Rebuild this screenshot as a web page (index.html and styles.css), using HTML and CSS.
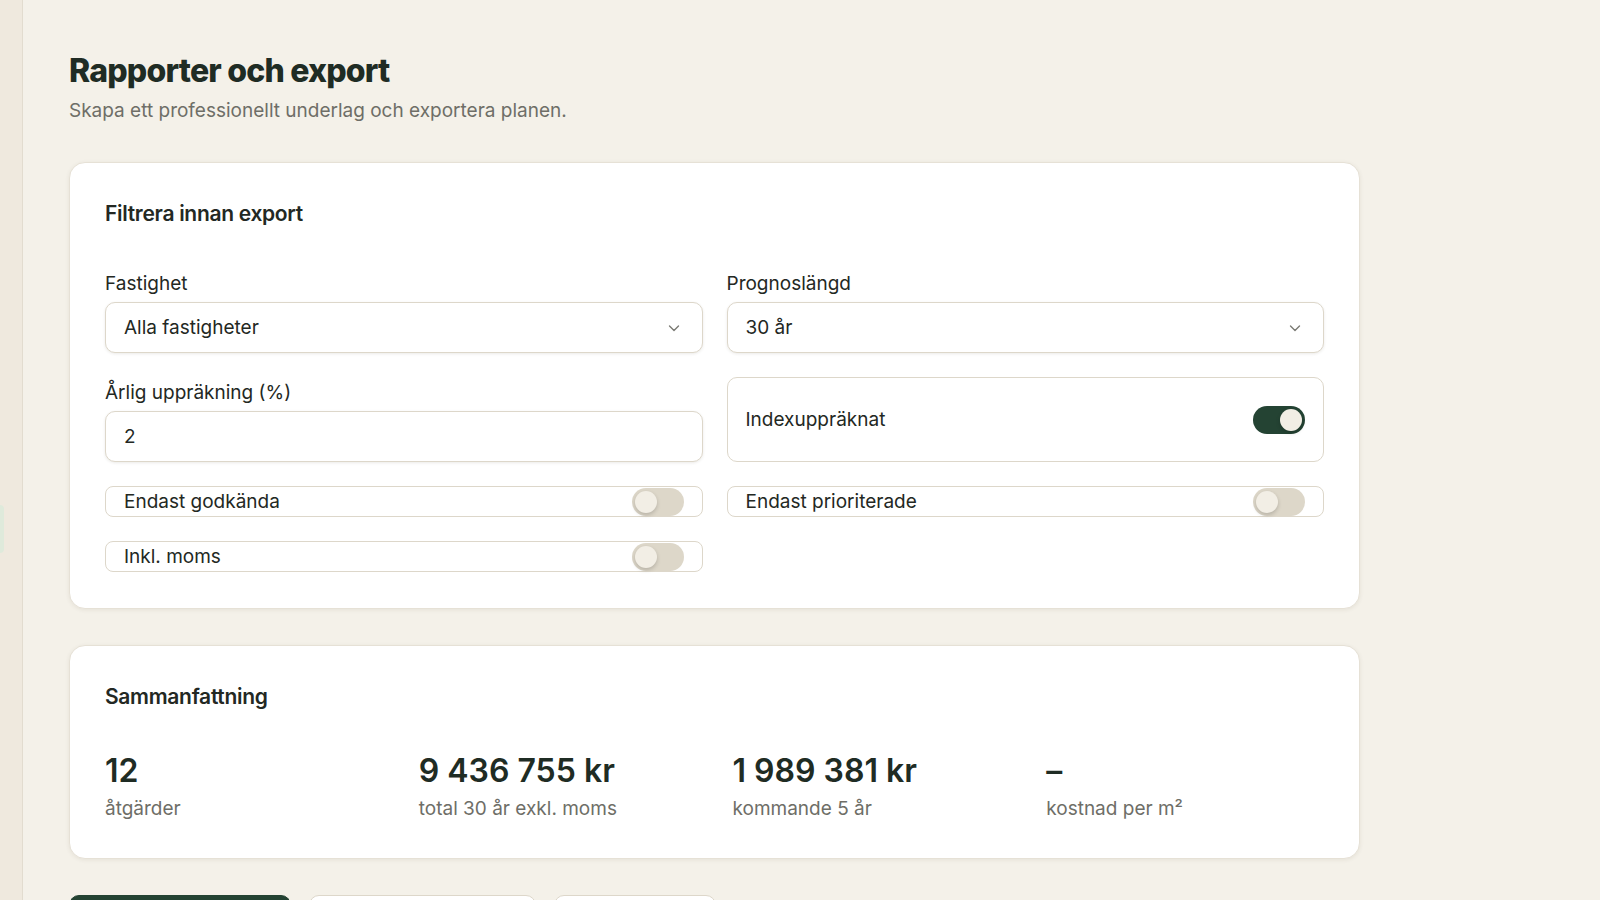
FILE: index.html
```html
<!DOCTYPE html>
<html lang="sv">
<head>
    <title>Rapporter och export</title>
    <meta name="viewport" content="width=device-width, initial-scale=1.0">
    <link rel="stylesheet" href="styles.css">
</head>
<body>
    <aside class="sidomeny">
        <div class="meny-aktiv"></div>
    </aside>

    <main class="innehall">
        <h1 class="rubrik">Rapporter och export</h1>
        <p class="underrubrik">Skapa ett professionellt underlag och exportera planen.</p>

        <section class="kort">
            <h2 class="kort-rubrik">Filtrera innan export</h2>
            <div class="filter">
                <div class="falt">
                    <label class="etikett">Fastighet</label>
                    <div class="valj">
                        <span>Alla fastigheter</span>
                        <svg width="16" height="16" viewBox="0 0 16 16"><polyline points="3.5,6 8,10.5 12.5,6" fill="none" stroke="#7a7a74" stroke-width="1.4" stroke-linecap="round" stroke-linejoin="round"/></svg>
                    </div>
                </div>
                <div class="falt">
                    <label class="etikett">Prognoslängd</label>
                    <div class="valj">
                        <span>30 år</span>
                        <svg width="16" height="16" viewBox="0 0 16 16"><polyline points="3.5,6 8,10.5 12.5,6" fill="none" stroke="#7a7a74" stroke-width="1.4" stroke-linecap="round" stroke-linejoin="round"/></svg>
                    </div>
                </div>
                <div class="falt">
                    <label class="etikett">Årlig uppräkning (%)</label>
                    <input class="inmatning" type="text" value="2">
                </div>
                <div class="vaxel-ruta">
                    <span>Indexuppräknat</span>
                    <span class="vaxel pa"><span class="knapp"></span></span>
                </div>
                <div class="vaxel-rad">
                    <span>Endast godkända</span>
                    <span class="vaxel"><span class="knapp"></span></span>
                </div>
                <div class="vaxel-rad">
                    <span>Endast prioriterade</span>
                    <span class="vaxel"><span class="knapp"></span></span>
                </div>
                <div class="vaxel-rad">
                    <span>Inkl. moms</span>
                    <span class="vaxel"><span class="knapp"></span></span>
                </div>
            </div>
        </section>

        <section class="kort">
            <h2 class="kort-rubrik sammanfattning">Sammanfattning</h2>
            <div class="siffror">
                <div>
                    <div class="siffra">12</div>
                    <div class="siffra-text">åtgärder</div>
                </div>
                <div>
                    <div class="siffra">9 436 755 kr</div>
                    <div class="siffra-text">total 30 år exkl. moms</div>
                </div>
                <div>
                    <div class="siffra">1 989 381 kr</div>
                    <div class="siffra-text">kommande 5 år</div>
                </div>
                <div>
                    <div class="siffra">–</div>
                    <div class="siffra-text">kostnad per m²</div>
                </div>
            </div>
        </section>

        <div class="knappar">
            <button class="btn primar">Exportera PDF</button>
            <button class="btn sekundar">Exportera Excel</button>
            <button class="btn sekundar smal">Skriv ut</button>
        </div>
    </main>
</body>
</html>
```

FILE: styles.css
```css
body {
    margin: 0;
    display: flex;
    min-height: 100vh;
    background: #f4f1e9;
    font-family: Inter, "Open Sans", sans-serif;
    color: #232823;
    overflow: hidden;
}
.sidomeny {
    width: 22px;
    flex-shrink: 0;
    background: #efe9de;
    border-right: 1px solid #e2dccf;
}
.meny-aktiv {
    margin-top: 505px;
    width: 4px;
    height: 48px;
    background: #dfeadb;
    border-radius: 0 8px 8px 0;
}
.innehall {
    flex: 1;
    padding: 50px 0 0 46px;
}
.rubrik {
    margin: 0;
    font-size: 32px;
    line-height: 42px;
    font-weight: 800;
    letter-spacing: -0.8px;
    color: #1f2c24;
}
.underrubrik {
    margin: 6px 0 0;
    font-size: 19px;
    line-height: 26px;
    color: #6e6e67;
}
.kort {
    width: 1291px;
    box-sizing: border-box;
    margin-top: 38px;
    padding: 36px 35px;
    background: #ffffff;
    border: 1px solid #e6e1d6;
    border-radius: 16px;
    box-shadow: 0 1px 4px rgba(60, 50, 30, 0.08);
}
.kort + .kort {
    margin-top: 36px;
}
.kort-rubrik {
    margin: 0 0 39px;
    font-size: 21px;
    line-height: 30px;
    font-weight: 600;
    letter-spacing: -0.3px;
    color: #232823;
}
.filter {
    display: grid;
    grid-template-columns: 1fr 1fr;
    gap: 24px;
}
.falt {
    display: flex;
    flex-direction: column;
    gap: 2px;
}
.etikett {
    font-size: 19px;
    line-height: 32px;
    color: #232823;
}
.valj,
.inmatning {
    box-sizing: border-box;
    height: 51px;
    padding: 0 18px;
    display: flex;
    align-items: center;
    justify-content: space-between;
    background: #fff;
    border: 1px solid #ddd7ca;
    border-radius: 10px;
    box-shadow: 0 1px 3px rgba(60, 50, 30, 0.1);
    font-size: 19px;
    color: #232823;
}
.inmatning {
    width: 100%;
    font-family: inherit;
    outline: none;
}
.valj svg {
    margin-right: 2px;
}
.vaxel-ruta,
.vaxel-rad {
    box-sizing: border-box;
    display: flex;
    align-items: center;
    justify-content: space-between;
    padding: 0 18px;
    border: 1px solid #ddd7ca;
    border-radius: 10px;
    font-size: 19px;
}
.vaxel-rad {
    height: 31px;
    border-radius: 8px;
}
.vaxel {
    width: 52px;
    height: 28px;
    border-radius: 14px;
    background: #ddd7c9;
    display: flex;
    align-items: center;
    padding: 0 3px;
    box-sizing: border-box;
}
.vaxel.pa {
    background: #244333;
    justify-content: flex-end;
}
.knapp {
    width: 22px;
    height: 22px;
    border-radius: 50%;
    background: #f2eee5;
    box-shadow: 0 2px 4px rgba(0, 0, 0, 0.18);
}
.sammanfattning {
    margin-bottom: 39px;
}
.siffror {
    display: grid;
    grid-template-columns: repeat(4, 1fr);
    gap: 36px;
}
.siffra {
    font-size: 32px;
    line-height: 40px;
    font-weight: 600;
    color: #1f2c24;
}
.siffra-text {
    margin-top: 5px;
    font-size: 19px;
    line-height: 26px;
    color: #6e6e67;
}
.knappar {
    display: flex;
    gap: 18px;
    margin-top: 36px;
}
.btn {
    height: 46px;
    border-radius: 10px;
    font-family: inherit;
    font-size: 17px;
    padding: 0 24px;
}
.primar {
    width: 222px;
    background: #244333;
    color: #fff;
    border: 1px solid #244333;
}
.sekundar {
    width: 227px;
    background: #fff;
    color: #232823;
    border: 1px solid #ddd7ca;
}
.smal {
    width: 162px;
}
```
